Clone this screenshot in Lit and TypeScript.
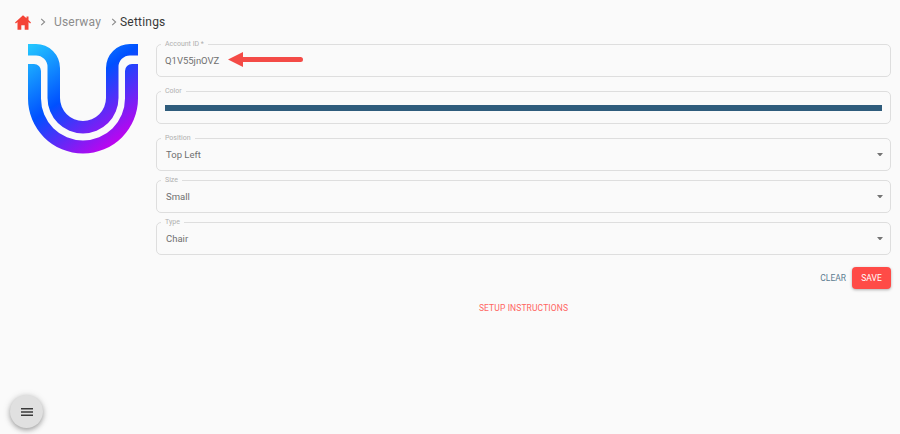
import { LitElement, html, css, svg } from "lit";
import { customElement } from "lit/decorators.js";

const caret = svg`<svg class="caret" width="6" height="3.5" viewBox="0 0 6 3.5"><path d="M0 0h6L3 3.5z" fill="#757575"/></svg>`;

@customElement("app-root")
export class AppRoot extends LitElement {
  static styles = css`
    :host {
      display: block;
      position: relative;
      height: 434px;
      background: #fafafa;
      font-family: Roboto, "Liberation Sans", sans-serif;
      overflow: hidden;
    }
    .crumbs {
      display: flex;
      align-items: center;
      height: 44px;
      padding-left: 15px;
      box-sizing: border-box;
      font-size: 12px;
      letter-spacing: 0.2px;
    }
    .home { width: 16px; height: 15px; display: block; }
    .chev { width: 8px; height: 8px; display: block; }
    .c1 { margin: 0 7px 0 8px; }
    .c2 { margin: 0 2px 0 9px; }
    .muted { color: #8c8c8c; }
    .current { color: #383838; }
    .main { display: flex; }
    .logo-col { width: 156px; flex: none; padding-left: 28px; box-sizing: border-box; }
    .logo { display: block; width: 110px; height: 110px; }
    .form { flex: none; width: 735px; display: flex; flex-direction: column; }
    .field {
      position: relative;
      height: 33px;
      box-sizing: border-box;
      border: 1px solid #dedede;
      border-radius: 5px;
      display: flex;
      align-items: center;
      padding: 0 8px;
      font-size: 9.5px;
      color: #707070;
    }
    .select { padding-left: 9px; }
    .gap-l { margin-top: 14px; }
    .gap-s { margin-top: 9px; }
    .label {
      position: absolute;
      left: 4px;
      top: -4px;
      padding: 0 4px;
      background: #fafafa;
      font-size: 7px;
      line-height: 7px;
      color: #b0b0b0;
    }
    .caret { margin-left: auto; margin-right: -1px; display: block; }
    .swatch { flex: 1; height: 6px; background: #2f5c7c; }
    .arrow { position: absolute; left: 71px; top: 7px; width: 75px; height: 15px; }
    .actions {
      display: flex;
      justify-content: flex-end;
      align-items: center;
      margin-top: 12px;
      gap: 6px;
    }
    button {
      font-family: inherit;
      font-size: 8.5px;
      font-weight: 400;
      border: none;
      background: none;
      padding: 0;
    }
    .clear { color: #5a7a90; }
    .save {
      width: 39px;
      height: 22px;
      border-radius: 4px;
      background: #ff4b47;
      color: #fff;
      box-shadow: 0 1px 3px rgba(0,0,0,.3);
    }
    .setup {
      text-align: center;
      margin-top: 13px;
      font-size: 8.5px;
      line-height: 12px;
      letter-spacing: 0.12px;
      color: #ff6461;
    }
    .fab {
      position: absolute;
      left: 10px;
      top: 395px;
      width: 33px;
      height: 33px;
      border-radius: 50%;
      background: #e0e0e0;
      box-shadow: 0 2px 5px rgba(0,0,0,.3), 0 1px 8px rgba(0,0,0,.12);
      display: flex;
      align-items: center;
      justify-content: center;
    }
  `;

  private select(label: string, value: string, cls: string) {
    return html`<div class="field select ${cls}">
      <span class="label">${label}</span>${value}${caret}
    </div>`;
  }

  render() {
    return html`
      <div class="crumbs">
        <svg class="home" viewBox="14.5 14 16 15"><path d="M22.5 14.3 26 17.3V15.5h2v3.6L30.5 21.4 29.6 22.4 28 21V28.8H24.2V24.3H20.8V28.8H17V21L15.4 22.4 14.5 21.4z" fill="#f44336"/></svg>
        <svg class="chev c1" viewBox="0 0 8 8"><path d="M2.2 .8 5.6 4 2.2 7.2" fill="none" stroke="#8a8a8a" stroke-width="1.1"/></svg>
        <span class="muted">Userway</span>
        <svg class="chev c2" viewBox="0 0 8 8"><path d="M2.2 .8 5.6 4 2.2 7.2" fill="none" stroke="#8a8a8a" stroke-width="1.1"/></svg>
        <span class="current">Settings</span>
      </div>
      <div class="main">
        <div class="logo-col">
          <svg class="logo" viewBox="28 44 110 110">
            <defs>
              <linearGradient id="g" gradientUnits="userSpaceOnUse" x1="30" y1="44" x2="108" y2="153">
                <stop offset="0" stop-color="#24c8ff"/>
                <stop offset=".48" stop-color="#0050ff"/>
                <stop offset="1" stop-color="#c800ee"/>
              </linearGradient>
            </defs>
            <path d="M28 64H34A7 7 0 0 1 41 71V98.5a42 42 0 0 0 84 0V71a7 7 0 0 1 7-7H138V98.5a55 55 0 0 1-110 0Z" fill="url(#g)"/>
            <path d="M28 44H36A24 24 0 0 1 60 68V98a23 23 0 0 0 46 0V68A24 24 0 0 1 130 44H138V55.5H130A11.5 11.5 0 0 0 118.5 67V98a35.5 35.5 0 0 1-71 0V67A11.5 11.5 0 0 0 36 55.5H28Z" fill="url(#g)"/>
          </svg>
        </div>
        <div class="form">
          <div class="field">
            <span class="label">Account ID *</span>Q1V55jnOVZ
            <svg class="arrow" viewBox="0 0 75 15"><path d="M0 7.5 15 0V5H72.5a2.5 2.5 0 0 1 0 5H15V15z" fill="#f44b47"/></svg>
          </div>
          <div class="field gap-l"><span class="label">Color</span><div class="swatch"></div></div>
          ${this.select("Position", "Top Left", "gap-l")}
          ${this.select("Size", "Small", "gap-s")}
          ${this.select("Type", "Chair", "gap-s")}
          <div class="actions">
            <button class="clear">CLEAR</button>
            <button class="save">SAVE</button>
          </div>
          <div class="setup">SETUP INSTRUCTIONS</div>
        </div>
      </div>
      <div class="fab">
        <svg width="12" height="8" viewBox="0 0 12 8"><path d="M0 0h12v1.4H0zM0 3.3h12v1.4H0zM0 6.6h12V8H0z" fill="#3a3a3a"/></svg>
      </div>
    `;
  }
}
